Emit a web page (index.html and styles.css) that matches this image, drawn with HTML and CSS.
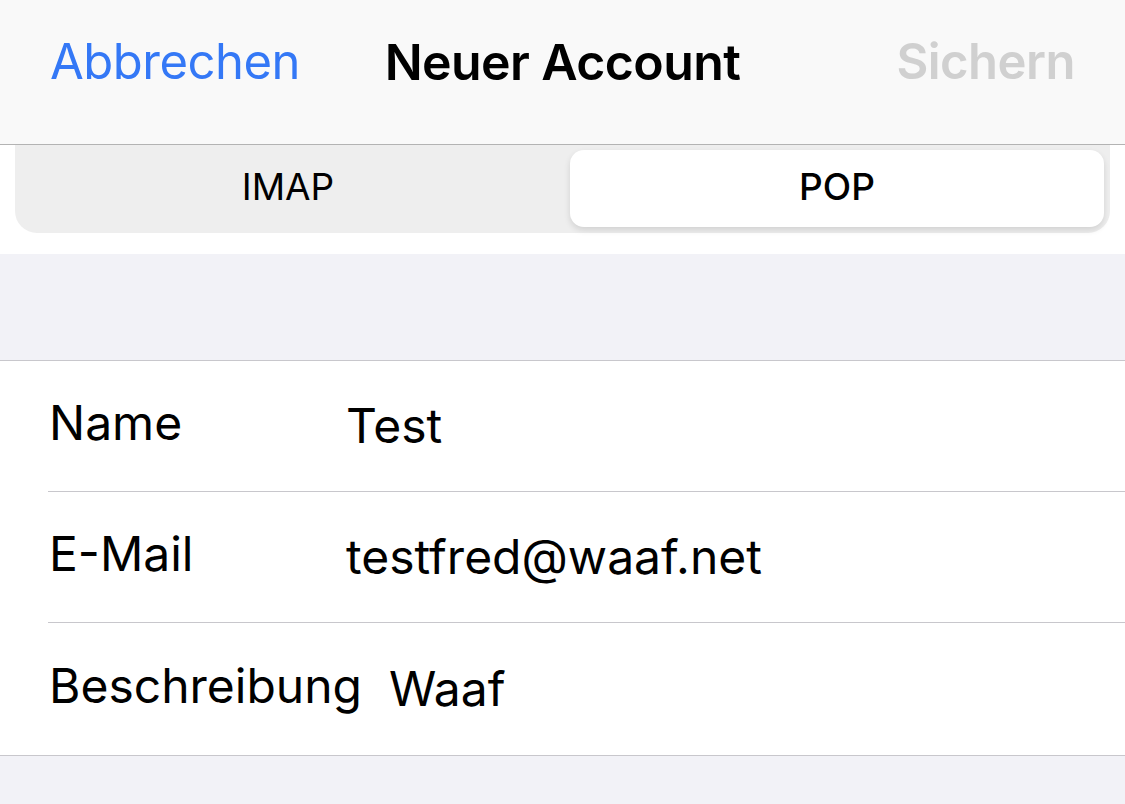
FILE: index.html
```html
<!DOCTYPE html>
<html lang="de">
<head>
  <meta charset="UTF-8" />
  <meta name="viewport" content="width=device-width, initial-scale=1.0"/>
  <title>Neuer Account</title>
  <link rel="stylesheet" href="styles.css">
</head>
<body>
  <div class="navbar">
    <a class="nav-btn cancel">Abbrechen</a>
    <h1>Neuer Account</h1>
    <a class="nav-btn save">Sichern</a>
  </div>

  <div class="segment-wrap">
    <div class="segment">
      <div class="seg-item">IMAP</div>
      <div class="seg-item active">POP</div>
    </div>
  </div>

  <div class="spacer"></div>

  <div class="form-group">
    <div class="row">
      <span class="label">Name</span>
      <span class="value">Test</span>
    </div>
    <div class="row">
      <span class="label">E-Mail</span>
      <span class="value">testfred@waaf.net</span>
    </div>
    <div class="row">
      <span class="label">Beschreibung</span>
      <span class="value">Waaf</span>
    </div>
  </div>
</body>
</html>
```

FILE: styles.css
```css
* {
  box-sizing: border-box;
  margin: 0;
  padding: 0;
}

body {
  font-family: Inter, 'Noto Sans', sans-serif;
  background-color: #f2f2f7;
  color: #000;
  height: 804px;
  overflow: hidden;
}

.navbar {
  height: 145px;
  background: #f9f9f9;
  border-bottom: 1px solid #b3b3b3;
  display: grid;
  grid-template-columns: 1fr auto 1fr;
  align-items: start;
  padding: 32px 50px 0 50px;
}

.navbar h1 {
  font-size: 50px;
  font-weight: 600;
  letter-spacing: -0.6px;
}

.nav-btn {
  font-size: 49px;
  letter-spacing: -0.5px;
}

.cancel {
  color: #3478f6;
}

.save {
  color: #d0d0d0;
  font-weight: 600;
  justify-self: end;
}

.segment-wrap {
  background: #fff;
  padding: 0 15px 21px 15px;
}

.segment {
  height: 88px;
  background: #eeeeee;
  border-radius: 0 0 22px 22px;
  display: flex;
  gap: 15px;
  padding: 5px 6px 6px 6px;
}

.seg-item {
  flex: 1;
  display: flex;
  align-items: center;
  justify-content: center;
  font-size: 37px;
  font-weight: 400;
  padding-bottom: 4px;
}

.seg-item.active {
  background: #fff;
  border-radius: 14px;
  box-shadow: 0 3px 6px rgba(0,0,0,0.12);
  font-weight: 500;
}

.spacer {
  height: 106px;
}

.form-group {
  background: #fff;
  border-top: 1px solid #c8c7cc;
  border-bottom: 1px solid #c8c7cc;
  padding-left: 48px;
}

.row {
  height: 131px;
  display: flex;
  align-items: center;
  gap: 27px;
  padding-left: 1px;
  border-bottom: 1px solid #c8c7cc;
  font-size: 48px;
}

.row:last-child {
  border-bottom: none;
  height: 132px;
}

.label {
  min-width: 270px;
  margin-top: -8px;
}

.value {
  margin-top: -2px;
}
```
